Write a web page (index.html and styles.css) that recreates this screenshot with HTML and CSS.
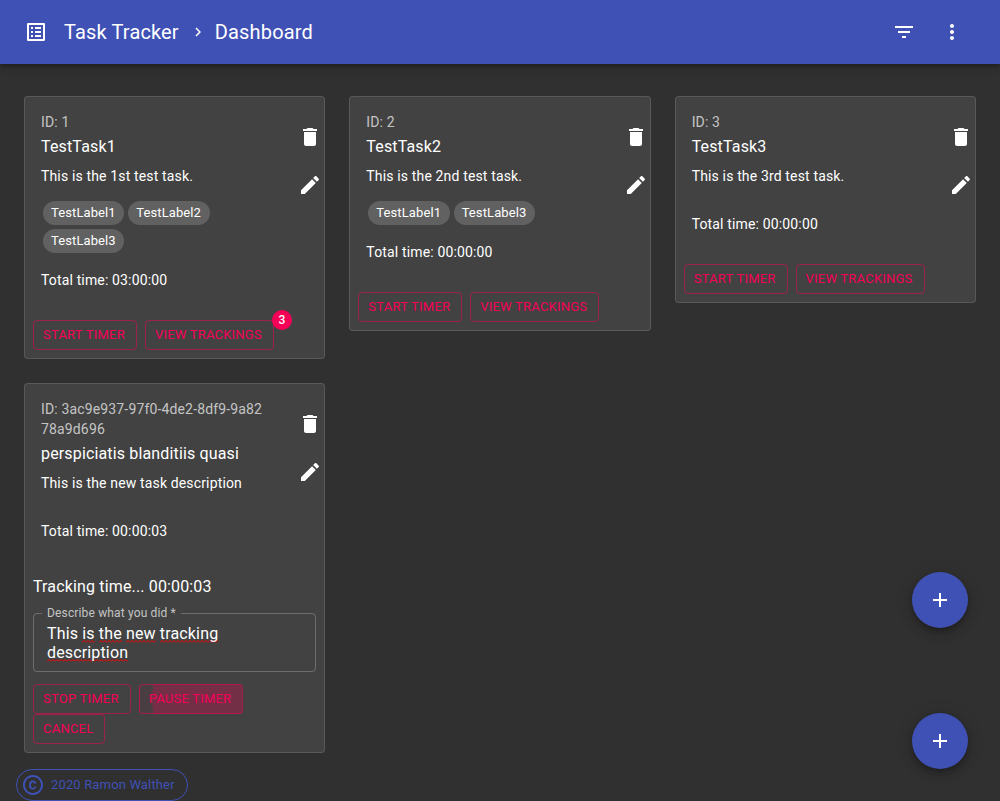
FILE: index.html
```html
<!DOCTYPE html>
<html lang="en">
<head>
<meta charset="utf-8">
<title>Task Tracker</title>
<link rel="stylesheet" href="styles.css">
</head>
<body>
<svg class="sprite" width="0" height="0" aria-hidden="true">
  <symbol id="i-delete" viewBox="0 0 24 24"><path d="M6 19c0 1.1.9 2 2 2h8c1.1 0 2-.9 2-2V7H6v12zM19 4h-3.5l-1-1h-5l-1 1H5v2h14V4z"/></symbol>
  <symbol id="i-edit" viewBox="0 0 24 24"><path d="M3 17.25V21h3.75L17.81 9.94l-3.75-3.75L3 17.25zM20.71 7.04c.39-.39.39-1.02 0-1.41l-2.34-2.34c-.39-.39-1.02-.39-1.41 0l-1.83 1.83 3.75 3.75 1.83-1.83z"/></symbol>
  <symbol id="i-add" viewBox="0 0 24 24"><path d="M19 13h-6v6h-2v-6H5v-2h6V5h2v6h6v2z"/></symbol>
</svg>
<header class="appbar">
  <svg class="icon appbar-logo" viewBox="0 0 24 24"><path d="M19 5v14H5V5h14m1.1-2H3.9c-.5 0-.9.4-.9.9v16.2c0 .4.4.9.9.9h16.2c.4 0 .9-.5.9-.9V3.9c0-.5-.5-.9-.9-.9zM11 7h6v2h-6V7zm0 4h6v2h-6v-2zm0 4h6v2h-6zM7 7h2v2H7zm0 4h2v2H7zm0 4h2v2H7z"/></svg>
  <span class="crumb">Task Tracker</span>
  <svg class="icon crumb-sep" viewBox="0 0 24 24"><path d="M10 6L8.59 7.41 13.17 12l-4.58 4.59L10 18l6-6z"/></svg>
  <span class="crumb">Dashboard</span>
  <span class="appbar-space"></span>
  <svg class="icon appbar-action" viewBox="0 0 24 24"><path d="M10 18h4v-2h-4v2zM3 6v2h18V6H3zm3 7h12v-2H6v2z"/></svg>
  <svg class="icon appbar-action" viewBox="0 0 24 24"><path d="M12 8c1.1 0 2-.9 2-2s-.9-2-2-2-2 .9-2 2 .9 2 2 2zm0 2c-1.1 0-2 .9-2 2s.9 2 2 2 2-.9 2-2-.9-2-2-2zm0 6c-1.1 0-2 .9-2 2s.9 2 2 2 2-.9 2-2-.9-2-2-2z"/></svg>
</header>
<main class="grid">
  <article class="card">
    <div class="card-top">
      <div class="card-body">
        <div class="task-id">ID: 1</div>
        <div class="task-title">TestTask1</div>
        <div class="task-desc">This is the 1st test task.</div>
        <div class="chips"><span class="chip">TestLabel1</span><span class="chip">TestLabel2</span><span class="chip">TestLabel3</span></div>
        <div class="task-total">Total time: 03:00:00</div>
      </div>
      <div class="card-tools">
        <svg class="icon tool"><use href="#i-delete"/></svg>
        <svg class="icon tool"><use href="#i-edit"/></svg>
      </div>
    </div>
    <div class="actions">
      <button class="btn">START TIMER</button>
      <span class="badge-wrap"><button class="btn">VIEW TRACKINGS</button><span class="badge">3</span></span>
    </div>
  </article>
  <article class="card">
    <div class="card-top">
      <div class="card-body">
        <div class="task-id">ID: 2</div>
        <div class="task-title">TestTask2</div>
        <div class="task-desc">This is the 2nd test task.</div>
        <div class="chips"><span class="chip">TestLabel1</span><span class="chip">TestLabel3</span></div>
        <div class="task-total">Total time: 00:00:00</div>
      </div>
      <div class="card-tools">
        <svg class="icon tool"><use href="#i-delete"/></svg>
        <svg class="icon tool"><use href="#i-edit"/></svg>
      </div>
    </div>
    <div class="actions">
      <button class="btn">START TIMER</button>
      <button class="btn">VIEW TRACKINGS</button>
    </div>
  </article>
  <article class="card">
    <div class="card-top">
      <div class="card-body">
        <div class="task-id">ID: 3</div>
        <div class="task-title">TestTask3</div>
        <div class="task-desc">This is the 3rd test task.</div>
        <div class="chips"></div>
        <div class="task-total">Total time: 00:00:00</div>
      </div>
      <div class="card-tools">
        <svg class="icon tool"><use href="#i-delete"/></svg>
        <svg class="icon tool"><use href="#i-edit"/></svg>
      </div>
    </div>
    <div class="actions">
      <button class="btn">START TIMER</button>
      <button class="btn">VIEW TRACKINGS</button>
    </div>
  </article>
  <article class="card">
    <div class="card-top">
      <div class="card-body">
        <div class="task-id">ID: 3ac9e937-97f0-4de2-8df9-9a8278a9d696</div>
        <div class="task-title">perspiciatis blanditiis quasi</div>
        <div class="task-desc">This is the new task description</div>
        <div class="chips"></div>
        <div class="task-total">Total time: 00:00:03</div>
      </div>
      <div class="card-tools">
        <svg class="icon tool"><use href="#i-delete"/></svg>
        <svg class="icon tool"><use href="#i-edit"/></svg>
      </div>
    </div>
    <div class="tracking">
      <div class="tracking-time">Tracking time... 00:00:03</div>
      <fieldset class="field">
        <legend class="field-label">Describe what you did *</legend>
        <div class="field-text">This <span class="typo">is</span> <span class="typo">the</span> <span class="typo">new</span> <span class="typo">tracking</span> <span class="typo">description</span></div>
      </fieldset>
    </div>
    <div class="actions actions-tracking">
      <button class="btn">STOP TIMER</button>
      <button class="btn btn-pressed">PAUSE TIMER</button>
      <button class="btn btn-cancel">CANCEL</button>
    </div>
  </article>
</main>
<footer class="copyright">
  <svg class="icon copyright-icon" viewBox="0 0 24 24"><path d="M11.88 9.14c1.28.06 1.61 1.15 1.63 1.66h1.79c-.08-1.98-1.49-3.19-3.45-3.19C9.64 7.61 8 9 8 12.14c0 1.94.93 4.24 3.82 4.24 2.2 0 3.38-1.64 3.41-2.93h-1.79c-.03.59-.45 1.38-1.61 1.44-1.28-.04-1.81-1.04-1.81-2.75 0-2.96 1.96-3 1.86-3zM12 2C6.48 2 2 6.48 2 12s4.48 10 10 10 10-4.48 10-10S17.52 2 12 2zm0 18c-4.41 0-8-3.59-8-8s3.59-8 8-8 8 3.59 8 8-3.59 8-8 8z"/></svg>
  <span>2020 Ramon Walther</span>
</footer>
<button class="fab fab-upper"><svg class="icon"><use href="#i-add"/></svg></button>
<button class="fab fab-lower"><svg class="icon"><use href="#i-add"/></svg></button>
</body>
</html>
```
FILE: styles.css
```css
* { box-sizing: border-box; }
html, body { height: 100%; }
body {
  margin: 0;
  height: 801px;
  overflow: hidden;
  position: relative;
  background: #303030;
  color: #fff;
  font-family: Roboto, "Liberation Sans", sans-serif;
  font-size: 14px;
  letter-spacing: .15px;
}
.sprite { position: absolute; }
.icon { width: 24px; height: 24px; fill: currentColor; flex: none; display: block; }

.appbar {
  height: 64px;
  background: #3f51b5;
  display: flex;
  align-items: center;
  padding: 0 36px 0 24px;
  box-shadow: 0 2px 4px -1px rgba(0,0,0,.2), 0 4px 5px 0 rgba(0,0,0,.14), 0 1px 10px 0 rgba(0,0,0,.12);
}
.appbar-logo { margin-right: 16px; }
.crumb { font-size: 20px; font-weight: 400; line-height: 1.6; }
.crumb-sep { width: 18px; height: 18px; margin: 0 8px 0 10px; }
.appbar-space { flex: 1; }
.appbar-action { margin-left: 24px; }

.grid {
  display: grid;
  grid-template-columns: repeat(3, 1fr);
  gap: 24px;
  padding: 32px 24px 0;
  align-items: start;
}
.card {
  background: #424242;
  border: 1px solid rgba(255,255,255,.12);
  border-radius: 4px;
  padding-bottom: 8px;
}
.card-top { display: flex; }
.card-body { flex: 1; min-width: 0; padding: 15px 27px 0 16px; }
.card-tools { width: 28px; flex: none; display: flex; flex-direction: column; align-items: center; padding: 28px 0 0; gap: 24px; }
.tool { width: 24px; height: 24px; }
.task-id { color: rgba(255,255,255,.7); line-height: 20px; word-break: break-all; }
.task-title { font-size: 16px; line-height: 24px; margin-top: 3px; }
.task-desc { line-height: 20px; margin-top: 7px; margin-bottom: 13px; }
.chips { display: flex; flex-wrap: wrap; }
.chip {
  height: 24px;
  margin: 2px;
  padding: 0 8.6px 0 8px;
  border-radius: 12px;
  background: #616161;
  font-size: 13px;
  line-height: 24px;
  letter-spacing: .1px;
}
.task-total { line-height: 20px; margin-top: 15px; }

.actions { display: flex; flex-wrap: wrap; gap: 8px; padding: 30px 8px 0; }
.badge-wrap { position: relative; display: inline-flex; }
.badge {
  position: absolute;
  right: -18px;
  top: -10px;
  width: 20px;
  height: 20px;
  border-radius: 50%;
  background: #f50057;
  font-size: 12px;
  font-weight: 500;
  line-height: 20px;
  text-align: center;
}
.btn {
  height: 30px;
  padding: 0 11px 2px 9px;
  border: 1px solid rgba(245,0,87,.5);
  border-radius: 4px;
  background: transparent;
  color: #f50057;
  font-family: inherit;
  font-size: 13px;
  font-weight: 450;
  letter-spacing: .22px;
  line-height: 1;
}
.btn-pressed {
  background:
    radial-gradient(circle 90px at 102px 50%, rgba(245,0,87,.25) 99.5%, transparent 100%),
    rgba(245,0,87,.04);
}

.tracking { padding: 34px 8px 0; }
.tracking-time { font-size: 16px; line-height: 24px; }
.field {
  margin: 8px 0 0;
  padding: 0 13px;
  height: 65px;
  border: 1px solid rgba(255,255,255,.23);
  border-radius: 4px;
  min-width: 0;
}
.field-label { padding: 0 5px; margin-left: -5px; font-size: 12px; line-height: 12px; color: rgba(255,255,255,.7); }
.field-text { font-size: 16px; line-height: 19px; margin-top: 5px; width: 190px; }
.typo {
  background: url("data:image/svg+xml,%3Csvg xmlns='http://www.w3.org/2000/svg' width='4' height='3'%3E%3Cpath d='M0 2.5L2 .5L4 2.5' fill='none' stroke='%23f00' stroke-width='1'/%3E%3C/svg%3E") repeat-x left bottom;
}
.actions-tracking { padding-top: 12px; gap: 0 8px; }

.copyright {
  position: absolute;
  left: 16px;
  top: 769px;
  width: 172px;
  height: 32px;
  display: flex;
  align-items: center;
  gap: 6px;
  padding: 0 0 1px 4px;
  border: 1px solid #3f51b5;
  border-radius: 16px;
  color: #3f51b5;
  font-size: 13px;
}
.fab {
  position: absolute;
  left: 912px;
  width: 56px;
  height: 56px;
  padding: 16px;
  border: 0;
  border-radius: 50%;
  background: #3f51b5;
  color: #fff;
  box-shadow: 0 3px 5px -1px rgba(0,0,0,.2), 0 6px 10px 0 rgba(0,0,0,.14), 0 1px 18px 0 rgba(0,0,0,.12);
}
.fab-upper { top: 572px; }
.fab-lower { top: 713px; }
```
